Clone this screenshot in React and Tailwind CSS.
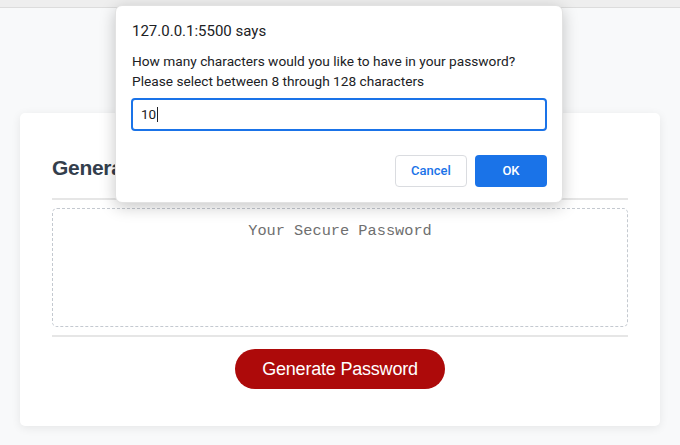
export default function App() {
  return (
    <div className="relative min-h-screen h-[445px] overflow-hidden bg-[#f8f9fa]">
      {/* Top strip */}
      <div className="h-[8px] bg-[#eeeeee] border-b border-[#dcdcdc]" />

      {/* Card */}
      <main className="px-[20px] pt-[105px]">
        <section className="bg-white rounded-[5px] shadow-[0_2px_10px_rgba(0,0,0,0.08)] px-[32px] pt-[42px] pb-[37px]">
          <h2 className="font-['Liberation_Sans',Arial,sans-serif] font-bold text-[21px] leading-[25px] tracking-[-0.3px] text-[#333e4c]">
            Generate a Password
          </h2>
          <div className="mt-[18px] h-[2px] bg-[#e6e6e6]" />
          <div className="mt-[8px] h-[119px] border border-dashed border-[#c4c9d0] rounded-[5px] flex justify-center pt-[13px]">
            <span className="font-['Liberation_Mono','Courier_New',monospace] text-[15.3px] leading-[18px] text-[#6f6f6f]">
              Your Secure Password
            </span>
          </div>
          <div className="mt-[8px] h-[2px] bg-[#e6e6e6]" />
          <div className="mt-[12px] flex justify-center">
            <button className="h-[40px] w-[210px] rounded-full bg-[#ad0a0a] text-white font-['Liberation_Sans',Arial,sans-serif] text-[18px] tracking-[-0.2px]">
              Generate Password
            </button>
          </div>
        </section>
      </main>

      {/* Prompt dialog */}
      <div className="absolute left-[115px] top-[5px] w-[448px] bg-white rounded-[7px] border border-[#e2e2e2] shadow-[0_4px_16px_rgba(0,0,0,0.22)] px-[15px] pt-[15px] pb-[15px] font-['Roboto','Noto_Sans',sans-serif] text-[#202124]">
        <div className="text-[15px] leading-[20px] pl-[1px]">127.0.0.1:5500 says</div>
        <div className="mt-[10px] text-[13.7px] leading-[20px] pl-[1px]">
          <div>How many characters would you like to have in your password?</div>
          <div>Please select between 8 through 128 characters</div>
        </div>
        <div className="mt-[7px] h-[33px] border-2 border-[#1a73e8] rounded-[4px] flex items-center px-[8px] text-[13.5px]">
          <span>10</span>
          <span className="ml-[1px] w-[1px] h-[15px] bg-[#202124]" />
        </div>
        <div className="mt-[24px] flex justify-end gap-[8px]">
          <button className="h-[32px] w-[72px] rounded-[4px] border border-[#dadce0] bg-white text-[#1a73e8] text-[13px] font-medium">
            Cancel
          </button>
          <button className="h-[32px] w-[72px] rounded-[4px] bg-[#1a73e8] text-white text-[13px] font-medium">
            OK
          </button>
        </div>
      </div>
    </div>
  )
}
